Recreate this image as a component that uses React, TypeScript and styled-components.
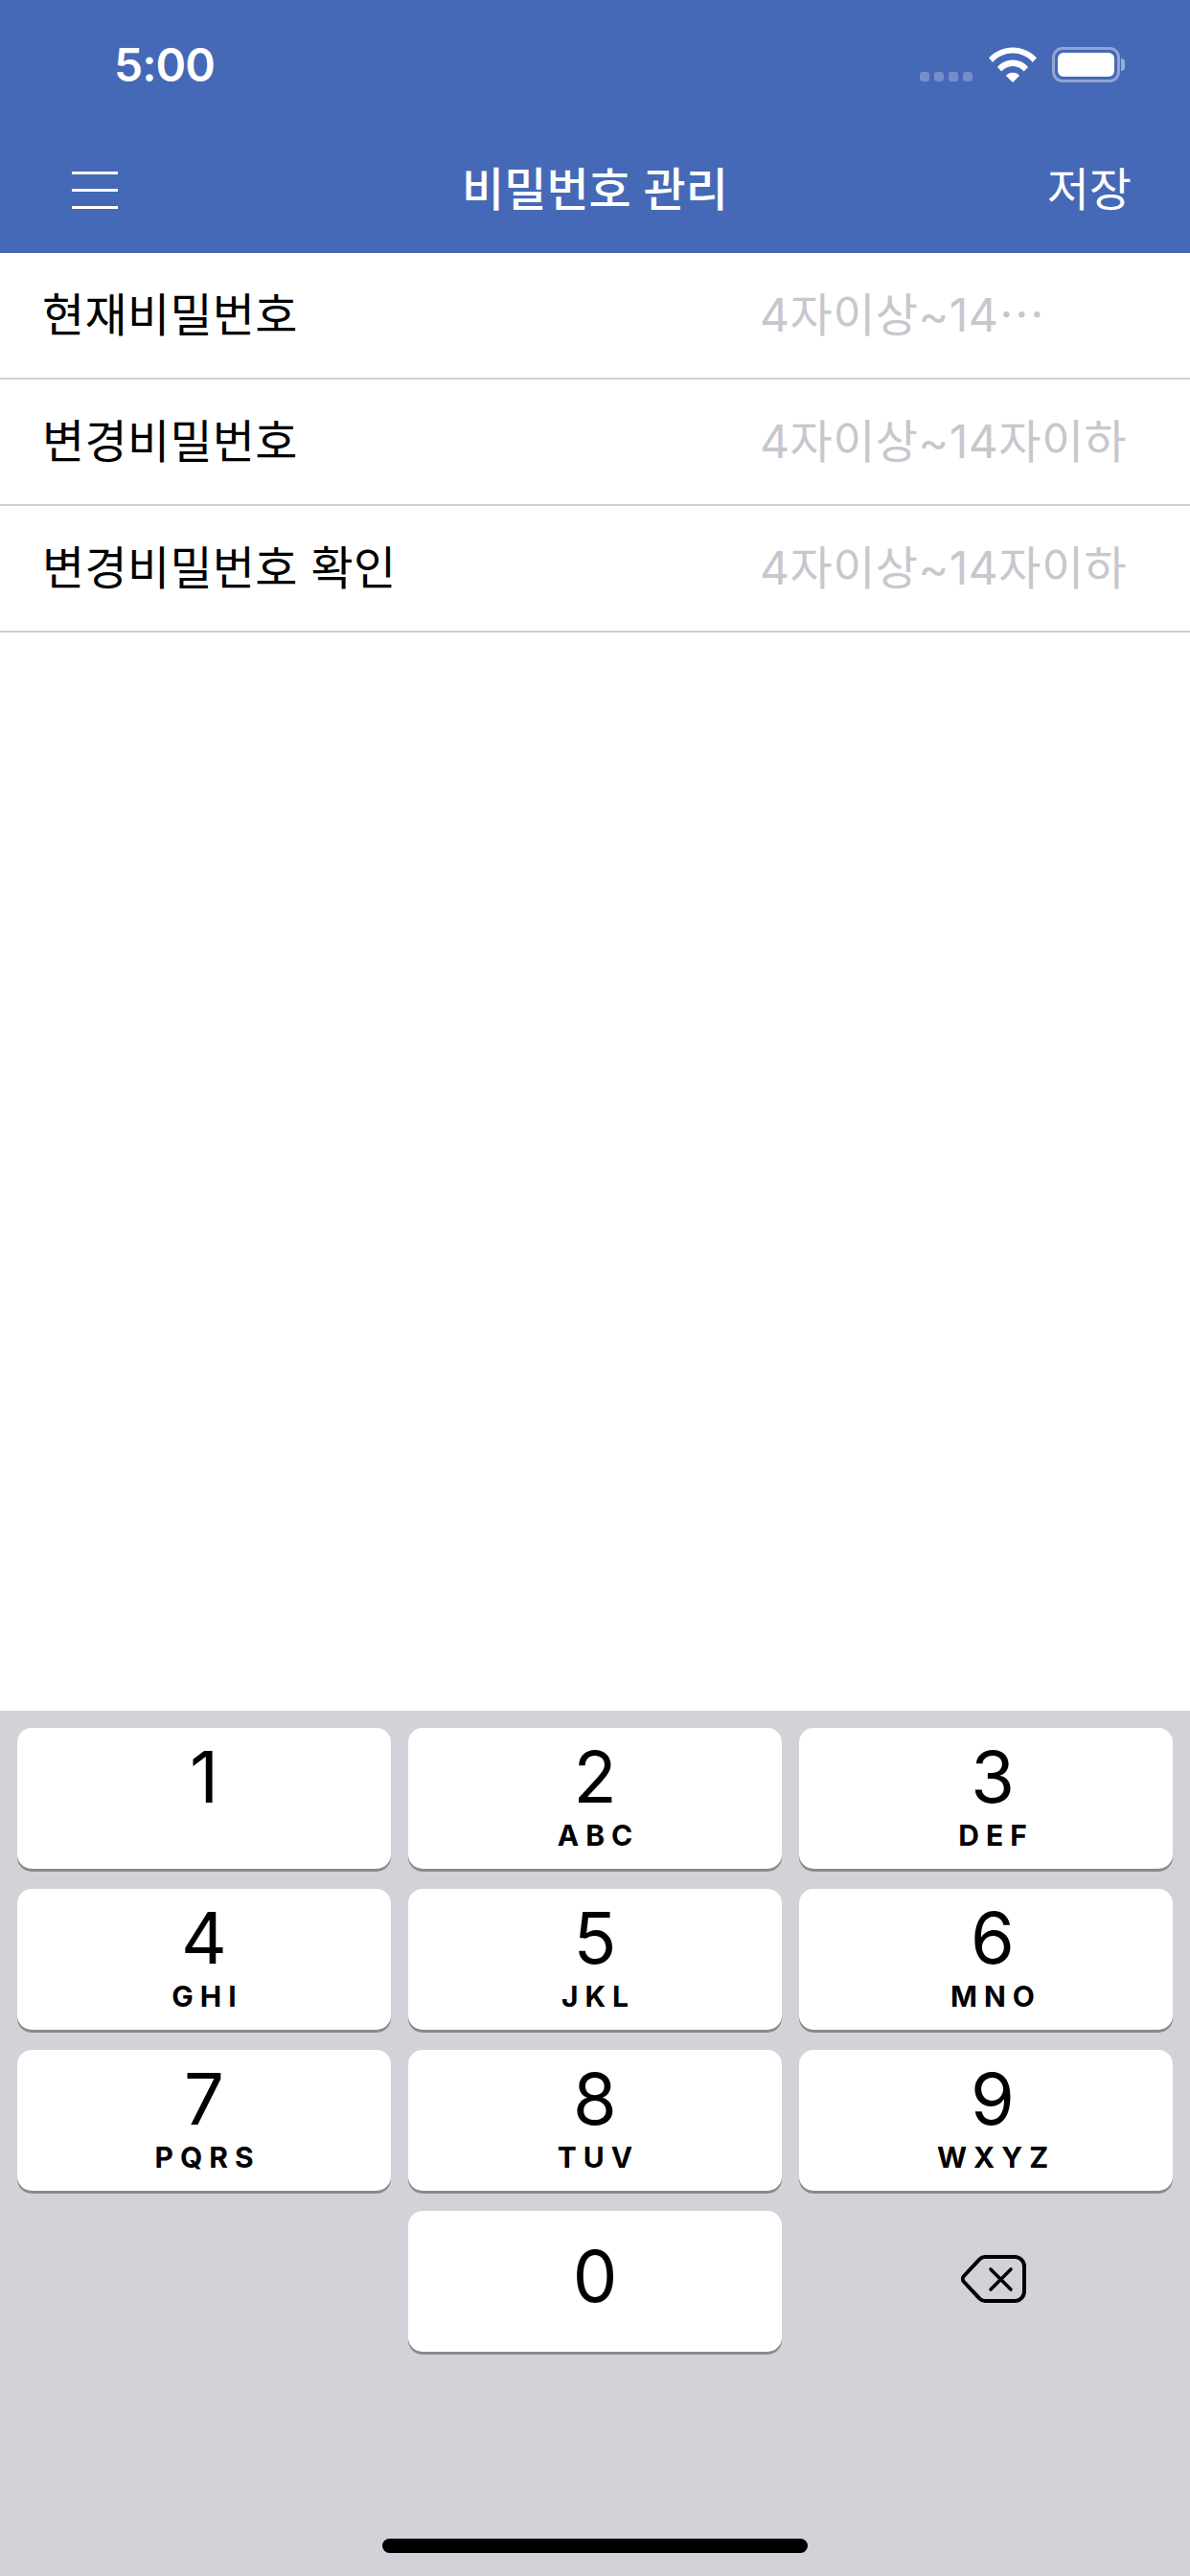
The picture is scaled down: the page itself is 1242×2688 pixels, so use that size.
import styled, { createGlobalStyle } from "styled-components";

const FONT = `Inter, "Noto Sans CJK KR", sans-serif`;

const rows = [
  { label: "현재비밀번호", hint: "4자이상~14⋯" },
  { label: "변경비밀번호", hint: "4자이상~14자이하" },
  { label: "변경비밀번호 확인", hint: "4자이상~14자이하" },
];

const keys = [
  { digit: "1", letters: "" },
  { digit: "2", letters: "ABC" },
  { digit: "3", letters: "DEF" },
  { digit: "4", letters: "GHI" },
  { digit: "5", letters: "JKL" },
  { digit: "6", letters: "MNO" },
  { digit: "7", letters: "PQRS" },
  { digit: "8", letters: "TUV" },
  { digit: "9", letters: "WXYZ" },
];

const WifiIcon = () => (
  <svg width="50" height="37" viewBox="0 0 50 37" fill="#fff">
    <path d="M0 11.5C6.5 4.5 15.2 0.5 25 0.5s18.5 4 25 11l-4.2 4.4C40.4 10 33.100 6.600 25 6.600S9.600 10 4.200 15.900z" />
    <path d="M9 21C13 16.500 18.700 13.600 25 13.600S37 16.500 41 21l-4.300 4.400C33.700 22.100 29.600 20 25 20s-8.700 2.100-11.700 5.400z" />
    <path d="M18 30c1.800-2 4.200-3.200 7-3.200s5.200 1.200 7 3.200l-7 7z" />
  </svg>
);

const BackspaceIcon = () => (
  <svg width="68" height="50" viewBox="0 0 68 50" fill="none" stroke="#000" strokeLinecap="round" strokeLinejoin="round">
    <path strokeWidth="4" d="M25 2H56A10 10 0 0 1 66 12V38A10 10 0 0 1 56 48H25A8 8 0 0 1 19.500 45.700L3 28A4.400 4.400 0 0 1 3 22L19.500 4.300A8 8 0 0 1 25 2Z" />
    <path strokeWidth="3.600" d="M31 15L52 36M52 15L31 36" />
  </svg>
);

export default function App() {
  return (
    <>
      <GlobalStyle />
      <Screen>
        <Header>
          <StatusBar>
            <Clock>5:00</Clock>
            <StatusIcons>
              <SignalDots>
                <SignalDot />
                <SignalDot />
                <SignalDot />
                <SignalDot />
              </SignalDots>
              <WifiIcon />
              <Battery>
                <BatteryLevel />
              </Battery>
            </StatusIcons>
          </StatusBar>
          <NavBar>
            <MenuButton>
              <MenuLine />
              <MenuLine />
              <MenuLine />
            </MenuButton>
            <NavTitle>비밀번호 관리</NavTitle>
            <SaveButton>저장</SaveButton>
          </NavBar>
        </Header>

        <Form>
          {rows.map((row) => (
            <FormRow key={row.label}>
              <RowLabel>{row.label}</RowLabel>
              <RowHint>{row.hint}</RowHint>
            </FormRow>
          ))}
        </Form>

        <Keyboard>
          <KeyGrid>
            {keys.map((key, index) => (
              <Key key={key.digit} $lastColumn={index % 3 === 2}>
                <Digit>{key.digit}</Digit>
                {key.letters && <Letters>{key.letters}</Letters>}
              </Key>
            ))}
            <BlankKey />
            <Key $centered>
              <Digit>0</Digit>
            </Key>
            <DeleteKey>
              <BackspaceIcon />
            </DeleteKey>
          </KeyGrid>
          <HomeIndicator />
        </Keyboard>
      </Screen>
    </>
  );
}

const GlobalStyle = createGlobalStyle`
  html, body {
    margin: 0;
    padding: 0;
    background: #fff;
  }
`;

const Screen = styled.div`
  display: flex;
  flex-direction: column;
  width: 1242px;
  height: 2688px;
  overflow: hidden;
  font-family: ${FONT};
`;

const Header = styled.header`
  background: #4569b7;
  color: #fff;
`;

const StatusBar = styled.div`
  display: flex;
  align-items: flex-start;
  justify-content: space-between;
  height: 132px;
  padding: 49px 73px 0 119px;
  box-sizing: border-box;
`;

const Clock = styled.div`
  font-size: 48px;
  font-weight: 600;
  line-height: 38px;
  letter-spacing: -1px;
`;

const StatusIcons = styled.div`
  display: flex;
  align-items: flex-start;
  height: 37px;
`;

const SignalDots = styled.div`
  display: flex;
  gap: 5px;
  margin: 26px 17px 0 0;
`;

const SignalDot = styled.span`
  width: 10px;
  height: 10px;
  border-radius: 3px;
  background: rgba(255, 255, 255, 0.25);
`;

const Battery = styled.div`
  position: relative;
  width: 71px;
  height: 37px;
  margin-left: 16px;
  padding: 3px;
  box-sizing: border-box;
  border: 3px solid rgba(255, 255, 255, 0.4);
  border-radius: 11px;

  &::after {
    content: "";
    position: absolute;
    top: 9px;
    right: -8px;
    width: 4px;
    height: 13px;
    border-radius: 0 4px 4px 0;
    background: rgba(255, 255, 255, 0.45);
  }
`;

const BatteryLevel = styled.div`
  height: 100%;
  border-radius: 6px;
  background: #fff;
`;

const NavBar = styled.nav`
  display: grid;
  grid-template-columns: 1fr auto 1fr;
  align-items: center;
  height: 132px;
  padding: 0 62px;
  box-sizing: border-box;
`;

const MenuButton = styled.div`
  display: flex;
  flex-direction: column;
  gap: 15px;
  width: 48px;
  margin-left: 13px;
`;

const MenuLine = styled.span`
  height: 3px;
  background: #fff;
`;

const NavTitle = styled.div`
  font-size: 48px;
  font-weight: 500;
  line-height: 60px;
  white-space: nowrap;
`;

const SaveButton = styled.div`
  justify-self: end;
  margin-right: -1px;
  font-size: 48px;
  line-height: 60px;
`;

const Form = styled.main`
  flex: 1;
  background: #fff;
`;

const FormRow = styled.div`
  display: flex;
  align-items: center;
  justify-content: space-between;
  height: 132px;
  padding: 0 68px 0 44px;
  box-sizing: border-box;
  border-bottom: 2px solid #cfcfd1;
`;

const RowLabel = styled.span`
  font-size: 48px;
  line-height: 60px;
  letter-spacing: 0.3px;
  color: #000;
`;

const RowHint = styled.span`
  width: 381px;
  font-size: 48px;
  line-height: 60px;
  letter-spacing: 0.5px;
  color: #c7c7cd;
  white-space: nowrap;
`;

const Keyboard = styled.section`
  display: flex;
  flex-direction: column;
  height: 903px;
  padding: 18px 18px 0;
  box-sizing: border-box;
  background: #d1d3d8;
`;

const KeyGrid = styled.div`
  display: grid;
  grid-template-columns: repeat(3, 390px);
  grid-auto-rows: 147px;
  gap: 21px 18px;
`;

const Key = styled.div<{ $centered?: boolean; $lastColumn?: boolean }>`
  display: flex;
  flex-direction: column;
  align-items: center;
  justify-content: ${(props) => (props.$centered ? "center" : "flex-start")};
  padding-top: ${(props) => (props.$centered ? "0" : "13px")};
  padding-bottom: ${(props) => (props.$centered ? "12px" : "0")};
  padding-left: ${(props) => (props.$lastColumn ? "14px" : "0")};
  box-sizing: border-box;
  border-radius: 15px;
  background: #fff;
  box-shadow: 0 3px 0 #898a8d;
  color: #000;
`;

const BlankKey = styled.div``;

const DeleteKey = styled.div`
  display: flex;
  align-items: center;
  justify-content: center;
  padding: 0 0 6px 16px;
`;

const Digit = styled.div`
  font-size: 74px;
  font-weight: 400;
  line-height: 76px;
`;

const Letters = styled.div`
  margin-top: 5px;
  margin-right: -7px;
  font-size: 30px;
  font-weight: 700;
  line-height: 36px;
  letter-spacing: 7px;
`;

const HomeIndicator = styled.div`
  align-self: center;
  width: 444px;
  height: 15px;
  margin-top: auto;
  margin-bottom: 24px;
  border-radius: 8px;
  background: #000;
`;
